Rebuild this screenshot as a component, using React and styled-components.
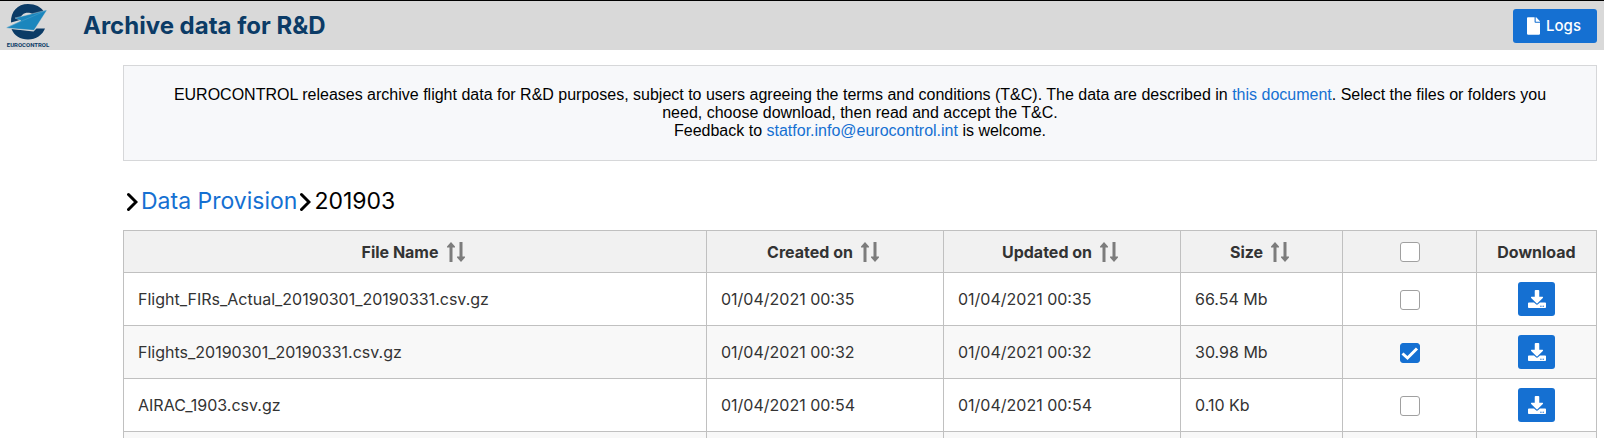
import React, { useState } from 'react';
import styled, { createGlobalStyle } from 'styled-components';
import { FaDownload, FaFile } from 'react-icons/fa';

const BLUE = '#1570d2';
const LINE = '#c0c0c0';

const GlobalStyle = createGlobalStyle`
  *, *::before, *::after { box-sizing: border-box; }
  body {
    margin: 0;
    background: #fff;
    color: #000;
    font-family: Inter, "Liberation Sans", sans-serif;
    font-size: 16px;
  }
`;

const Page = styled.div`
  height: 100vh;
  overflow: hidden;
`;

const TopBar = styled.header`
  display: flex;
  align-items: center;
  height: 50px;
  padding: 0 7px 0 6px;
  border-top: 1px solid #000;
  background: #d9d9d9;
`;

const Brand = styled.a`
  display: flex;
  flex-direction: column;
  align-items: center;
  width: 44px;
  color: #0b3b66;
  font: bold 6px/8px Roboto, sans-serif;
  text-decoration: none;
`;

const Emblem = styled.svg`
  display: block;
  width: 40px;
  height: 38px;
  overflow: visible;
`;

const Title = styled.h1`
  flex: 1;
  margin: 0 0 0 33px;
  color: #0b3b66;
  font-size: 24px;
  font-weight: 700;
  line-height: 30px;
`;

const LogsButton = styled.button`
  display: flex;
  align-items: center;
  gap: 6px;
  height: 34px;
  padding: 0 16px 0 14px;
  border: 0;
  border-radius: 3px;
  background: ${BLUE};
  color: #fff;
  font: 500 15px/18px Inter, sans-serif;

  svg { width: 13px; height: 18px; }
`;

const Content = styled.main`
  margin: 15px 7px 0 123px;
`;

const Notice = styled.section`
  padding: 20px;
  border: 1px solid #d6d7d9;
  background: #f7f8fa;
  font-family: "Liberation Sans", sans-serif;
  line-height: 18px;
  text-align: center;
`;

const NoticeText = styled.p`
  margin: 0 auto;
  max-width: 1400px;
`;

const Link = styled.a`
  color: ${BLUE};
  text-decoration: none;
`;

const Breadcrumb = styled.nav`
  display: flex;
  align-items: center;
  gap: 3px;
  margin: 24px 0 12px;
  padding-left: 4px;
  font-size: 23px;
  line-height: 33px;
`;

const Chevron = styled.svg`
  width: 11px;
  height: 20px;
  fill: none;
  stroke: #000;
  stroke-width: 3;
  stroke-linecap: round;
`;

const FileTable = styled.table`
  width: 100%;
  border-collapse: collapse;
  table-layout: fixed;
  color: #333;
`;

const Column = styled.col`
  width: ${({ $width }) => $width || 'auto'};
`;

const HeadCell = styled.th`
  height: 42px;
  padding: 0;
  border: 1px solid ${LINE};
  background: #f1f1f1;
  font-weight: 700;
  line-height: 20px;
`;

const SortButton = styled.button`
  display: inline-flex;
  align-items: center;
  gap: 8px;
  padding: 0 4px 0 0;
  border: 0;
  background: none;
  color: inherit;
  font: inherit;
  vertical-align: middle;
`;

const SortArrows = styled.svg`
  width: 18px;
  height: 20px;
  fill: #7c7c7c;
`;

const Row = styled.tr`
  height: 53px;
  background: ${({ $shaded }) => ($shaded ? '#f8f8f8' : '#fff')};
`;

const Cell = styled.td`
  padding: 9px 14px;
  border: 1px solid ${LINE};
  line-height: 20px;
  text-align: ${({ $align }) => $align || 'left'};
`;

const TickLabel = styled.label`
  display: inline-grid;
  vertical-align: middle;

  > * { grid-area: 1 / 1; }
`;

const TickBox = styled.input`
  appearance: none;
  width: 20px;
  height: 20px;
  margin: 0;
  border: 1px solid #a0a0a0;
  border-radius: 3px;
  background: #fff;

  &:checked { border-color: ${BLUE}; background: ${BLUE}; }
  & + svg { visibility: hidden; }
  &:checked + svg { visibility: visible; }
`;

const Tick = styled.svg`
  width: 20px;
  height: 20px;
  fill: none;
  stroke: #fff;
  stroke-width: 3;
  pointer-events: none;
`;

const DownloadButton = styled.button`
  display: inline-flex;
  align-items: center;
  justify-content: center;
  width: 37px;
  height: 34px;
  padding: 0;
  border: 0;
  border-radius: 3px;
  background: ${BLUE};
  color: #fff;
  vertical-align: middle;

  svg { width: 18px; height: 18px; }
`;

const FILES = [
  { name: 'Flight_FIRs_Actual_20190301_20190331.csv.gz', date: '01/04/2021 00:35', size: '66.54 Mb' },
  { name: 'Flights_20190301_20190331.csv.gz', date: '01/04/2021 00:32', size: '30.98 Mb' },
  { name: 'AIRAC_1903.csv.gz', date: '01/04/2021 00:54', size: '0.10 Kb' },
];

const SORTABLE = ['File Name', 'Created on', 'Updated on', 'Size'];
const WIDTHS = [null, '237px', '237px', '162px', '134px', '120px'];

function Logo() {
  return (
    <Emblem viewBox="0 0 40 38" aria-hidden="true">
      <path
        d="M3 19.500C2.500 8.500 9.500 1 20 1C27.500 1 33 4 36 8.500L24.500 11.300C23 10.200 21.500 9.800 20 9.800C15.500 9.800 12.500 12.500 12 17Z"
        fill="#0b3b66"
      />
      <path
        d="M3.500 26L25.500 28.500L28.500 25.500H37C34.500 32 28 36.500 20 36.500C12.500 36.500 6 32.500 3.500 26Z"
        fill="#0b3b66"
      />
      <path d="M39 7L7 15L13 17.800L-2 25L26 27.300Z" fill="#1b86bd" stroke="#d9d9d9" strokeWidth="0.4" />
      <path d="M38 7.500L-1 24.500" stroke="#4fa3cd" strokeWidth="0.5" />
    </Emblem>
  );
}

function CrumbMark() {
  return (
    <Chevron viewBox="0 0 11 20" aria-hidden="true">
      <path d="M1.500 2.500L9 10L1.500 17.500" />
    </Chevron>
  );
}

function SelectBox({ label, checked, onChange }) {
  return (
    <TickLabel>
      <TickBox type="checkbox" aria-label={label} checked={checked} onChange={onChange} />
      <Tick viewBox="0 0 20 20" aria-hidden="true">
        <path d="M2.500 10.500L7.500 15L17 5.500" />
      </Tick>
    </TickLabel>
  );
}

export default function App() {
  const [selected, setSelected] = useState([false, true, false]);
  const toggle = (index) => setSelected(selected.map((value, i) => (i === index ? !value : value)));
  const all = selected.every(Boolean);

  return (
    <Page>
      <GlobalStyle />
      <TopBar>
        <Brand href="#home">
          <Logo />
          EUROCONTROL
        </Brand>
        <Title>Archive data for R&amp;D</Title>
        <LogsButton type="button">
          <FaFile aria-hidden="true" />
          Logs
        </LogsButton>
      </TopBar>
      <Content>
        <Notice>
          <NoticeText>
            EUROCONTROL releases archive flight data for R&amp;D purposes, subject to users agreeing the terms and
            conditions (T&amp;C). The data are described in <Link href="#document">this document</Link>. Select the
            files or folders you need, choose download, then read and accept the T&amp;C.
          </NoticeText>
          <NoticeText>
            Feedback to <Link href="mailto:statfor.info@eurocontrol.int">statfor.info@eurocontrol.int</Link> is
            welcome.
          </NoticeText>
        </Notice>
        <Breadcrumb aria-label="Breadcrumb">
          <CrumbMark />
          <Link href="#data-provision">Data Provision</Link>
          <CrumbMark />
          <span>201903</span>
        </Breadcrumb>
        <FileTable>
          <colgroup>
            {WIDTHS.map((width, i) => (
              <Column key={i} $width={width} />
            ))}
          </colgroup>
          <thead>
            <tr>
              {SORTABLE.map((label) => (
                <HeadCell key={label} scope="col">
                  <SortButton type="button">
                    {label}
                    <SortArrows viewBox="0 0 18 20" aria-hidden="true">
                      <path d="M4 0L8 4.500V5.500H5.500V20H2.500V5.500H0V4.500Z" />
                      <path d="M14 20L18 15.500V14.500H15.500V0H12.500V14.500H10V15.500Z" />
                    </SortArrows>
                  </SortButton>
                </HeadCell>
              ))}
              <HeadCell scope="col">
                <SelectBox label="Select all files" checked={all} onChange={() => setSelected(selected.map(() => !all))} />
              </HeadCell>
              <HeadCell scope="col">Download</HeadCell>
            </tr>
          </thead>
          <tbody>
            {FILES.map((file, i) => (
              <Row key={file.name} $shaded={i % 2 === 1}>
                <Cell>{file.name}</Cell>
                <Cell>{file.date}</Cell>
                <Cell>{file.date}</Cell>
                <Cell>{file.size}</Cell>
                <Cell $align="center">
                  <SelectBox label={`Select ${file.name}`} checked={selected[i]} onChange={() => toggle(i)} />
                </Cell>
                <Cell $align="center">
                  <DownloadButton type="button" aria-label={`Download ${file.name}`}>
                    <FaDownload aria-hidden="true" />
                  </DownloadButton>
                </Cell>
              </Row>
            ))}
            <Row $shaded>
              {WIDTHS.map((_, i) => (
                <Cell key={i} />
              ))}
            </Row>
          </tbody>
        </FileTable>
      </Content>
    </Page>
  );
}
